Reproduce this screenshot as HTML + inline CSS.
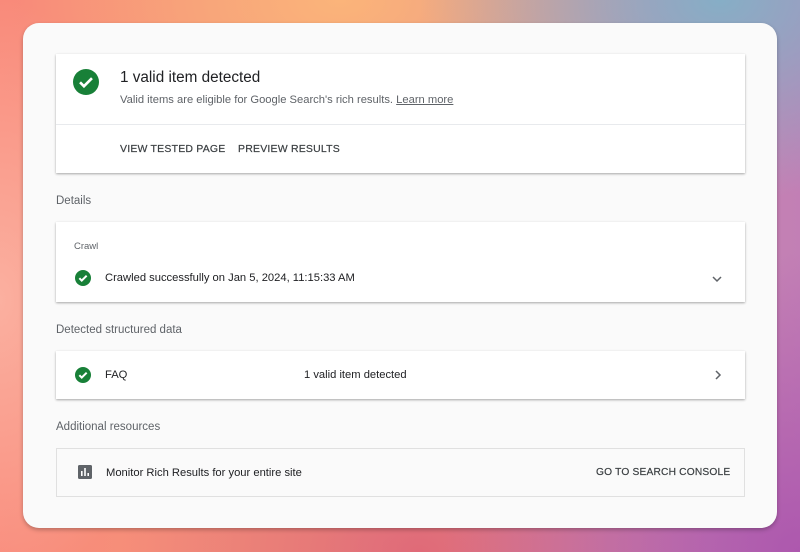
<!DOCTYPE html>
<html><head><meta charset="utf-8"><style>
*{box-sizing:border-box;margin:0;padding:0}
body{width:800px;height:552px;overflow:hidden;font-family:"Liberation Sans",Arial,sans-serif;position:relative;
background:
radial-gradient(ellipse 300px 200px at 720px 0px,#86aec6 0%,rgba(134,174,198,0) 100%),
radial-gradient(ellipse 320px 180px at 340px 0px,#fbb47a 0%,rgba(251,180,122,0) 100%),
radial-gradient(ellipse 360px 300px at 800px 552px,#ad58ae 0%,rgba(173,88,174,0) 100%),
radial-gradient(ellipse 300px 200px at 420px 552px,#e06a78 0%,rgba(224,106,120,0) 100%),
radial-gradient(ellipse 160px 300px at 0px 300px,#fbb0a0 0%,rgba(251,176,160,0) 100%),
linear-gradient(90deg,#f98a7a 0%,#f29478 40%,#d090a8 75%,#c27fb5 100%);}
.main{position:absolute;left:23px;top:23px;width:754px;height:505px;background:#fafafa;border-radius:16px;box-shadow:0 2px 4px rgba(0,0,0,.25)}
.card{position:absolute;left:33px;width:689px;background:#fff;box-shadow:0 1px 2px rgba(0,0,0,.25),0 1px 3px rgba(0,0,0,.1)}
.chk{position:absolute;border-radius:50%;background:#188038}
.chk svg{display:block;width:100%;height:100%}
.lbl{position:absolute;left:33px;font-size:11.5px;color:#5f6368}
.btn{position:absolute;font-size:10.5px;letter-spacing:.2px;color:#3c4043;white-space:nowrap;-webkit-text-stroke:.2px #3c4043}
.t{position:absolute;font-size:11.2px;color:#202124;white-space:nowrap}
</style></head><body>
<div class="main">
 <div class="card" style="top:31px;height:119px">
  <div class="chk" style="left:17px;top:15px;width:26px;height:26px"><svg viewBox="0 0 24 24"><path d="M6.5 12.3l3.6 3.6 7.4-7.4" fill="none" stroke="#fff" stroke-width="2.4"/></svg></div>
  <div style="position:absolute;left:64px;top:15px;font-size:15.3px;color:#202124">1 valid item detected</div>
  <div style="position:absolute;left:64px;top:40px;font-size:11.2px;color:#5f6368;white-space:nowrap">Valid items are eligible for Google Search's rich results. <span style="text-decoration:underline">Learn more</span></div>
  <div style="position:absolute;left:0;right:0;top:70px;border-top:1px solid #e8eaed"></div>
  <div class="btn" style="left:64px;top:89px">VIEW TESTED PAGE</div>
  <div class="btn" style="left:182px;top:89px">PREVIEW RESULTS</div>
 </div>
 <div class="lbl" style="top:172px">Details</div>
 <div class="card" style="top:199px;height:80px">
  <div style="position:absolute;left:18px;top:19px;font-size:9.5px;color:#5f6368">Crawl</div>
  <div class="chk" style="left:19px;top:48px;width:16px;height:16px"><svg viewBox="0 0 24 24"><path d="M6.5 12.3l3.6 3.6 7.4-7.4" fill="none" stroke="#fff" stroke-width="3"/></svg></div>
  <div class="t" style="left:49px;top:50px">Crawled successfully on Jan 5, 2024, 11:15:33 AM</div>
  <svg style="position:absolute;left:655px;top:51px" width="12" height="12" viewBox="0 0 12 12"><path d="M2 4l4 4 4-4" fill="none" stroke="#5f6368" stroke-width="1.5"/></svg>
 </div>
 <div class="lbl" style="top:301px">Detected structured data</div>
 <div class="card" style="top:328px;height:48px">
  <div class="chk" style="left:19px;top:16px;width:16px;height:16px"><svg viewBox="0 0 24 24"><path d="M6.5 12.3l3.6 3.6 7.4-7.4" fill="none" stroke="#fff" stroke-width="3"/></svg></div>
  <div class="t" style="left:49px;top:18px">FAQ</div>
  <div class="t" style="left:248px;top:18px">1 valid item detected</div>
  <svg style="position:absolute;left:656px;top:18px" width="12" height="12" viewBox="0 0 12 12"><path d="M4 2l4 4-4 4" fill="none" stroke="#5f6368" stroke-width="1.5"/></svg>
 </div>
 <div class="lbl" style="top:398px">Additional resources</div>
 <div style="position:absolute;left:33px;top:425px;width:689px;height:49px;border:1px solid #e0e0e0;background:#fafafa">
  <svg style="position:absolute;left:21px;top:16px" width="14" height="14" viewBox="0 0 14 14"><rect width="14" height="14" rx="1.5" fill="#5f6368"/><rect x="3" y="6" width="1.6" height="5" fill="#fff"/><rect x="6.2" y="3" width="1.6" height="8" fill="#fff"/><rect x="9.4" y="8" width="1.6" height="3" fill="#fff"/></svg>
  <div class="t" style="left:49px;top:18px">Monitor Rich Results for your entire site</div>
  <div class="btn" style="left:539px;top:18px;font-size:10.2px">GO TO SEARCH CONSOLE</div>
 </div>
</div>
</body></html>
